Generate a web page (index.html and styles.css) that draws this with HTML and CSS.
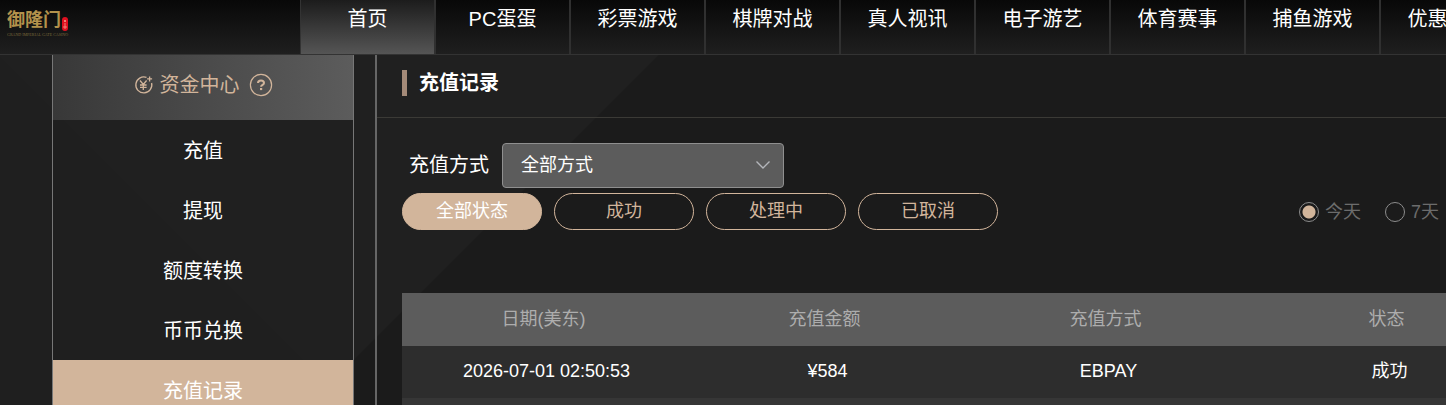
FILE: index.html
```html
<!DOCTYPE html>
<html lang="zh-CN">
<head>
<meta charset="utf-8">
<meta name="viewport" content="width=device-width, initial-scale=1">
<title>充值记录</title>
<link rel="stylesheet" href="styles.css">
</head>
<body class="page">
<header class="topbar">
  <a class="brand" href="#" aria-label="御隆门">
    <svg class="brand-logo" width="64" height="34" viewBox="0 0 64 34">
      <text class="brand-name" x="0" y="22">御隆门</text>
      <rect x="55" y="13" width="6" height="14" rx="3" fill="#e01020"/>
      <path d="M57 16l2 2M59 16l-2 2M57 20h2M57 22h2v2h-2z" fill="none" stroke="#f2a08c" stroke-width=".8"/>
      <text class="brand-sub" x="0" y="32">GRAND IMPERIAL GATE CASINO</text>
    </svg>
  </a>
  <nav class="nav">
    <a class="nav-item is-active" href="#">首页</a>
    <a class="nav-item" href="#">PC蛋蛋</a>
    <a class="nav-item" href="#">彩票游戏</a>
    <a class="nav-item" href="#">棋牌对战</a>
    <a class="nav-item" href="#">真人视讯</a>
    <a class="nav-item" href="#">电子游艺</a>
    <a class="nav-item" href="#">体育赛事</a>
    <a class="nav-item" href="#">捕鱼游戏</a>
    <a class="nav-item" href="#">优惠活动</a>
  </nav>
</header>
<div class="layout">
  <aside class="sidebar">
    <h2 class="side-title">
      <svg width="20" height="20" viewBox="0 0 20 20" fill="none" stroke="currentColor" stroke-width="1.3">
        <path d="M12.500 2.400A8 8 0 1 0 17.600 8"/>
        <path d="M15.600 1.400v5M13.100 3.900h5"/>
        <path d="M6 5.500l3.300 4 3.300-4M9.300 9.500v5.500M6 10h6.600M6 12.400h6.600"/>
      </svg>
      <span>资金中心</span>
      <svg class="help" width="24" height="24" viewBox="0 0 24 24" fill="none" stroke="currentColor">
        <circle cx="12" cy="12" r="10.600" stroke-width="1.200"/>
        <path d="M9 10c0-3.400 6-3.400 6 0 0 1.800-2.900 1.800-2.900 3.700" stroke-width="2"/>
        <path d="M11 15h2.200v2.100H11z" fill="currentColor" stroke="none"/>
      </svg>
    </h2>
    <a class="side-item" href="#">充值</a>
    <a class="side-item" href="#">提现</a>
    <a class="side-item" href="#">额度转换</a>
    <a class="side-item" href="#">币币兑换</a>
    <a class="side-item is-active" href="#">充值记录</a>
  </aside>
  <main class="content">
    <h1 class="title">充值记录</h1>
    <div class="filters">
      <div class="method">
        <label for="method">充值方式</label>
        <span class="select-wrap">
          <select id="method"><option>全部方式</option></select>
          <svg class="chevron" width="16" height="10" viewBox="0 0 16 10" fill="none" stroke="#b4b6bb" stroke-width="1.400"><path d="M1.500 1.500L8 8l6.500-6.500"/></svg>
        </span>
      </div>
      <div class="status-row">
        <div class="pills">
          <button class="pill is-active" type="button">全部状态</button>
          <button class="pill" type="button">成功</button>
          <button class="pill" type="button">处理中</button>
          <button class="pill" type="button">已取消</button>
        </div>
        <div class="ranges">
          <label class="range"><input type="radio" name="range" checked>今天</label>
          <label class="range"><input type="radio" name="range">7天</label>
        </div>
      </div>
    </div>
    <table class="records">
      <thead>
        <tr><th>日期(美东)</th><th>充值金额</th><th>充值方式</th><th>状态</th></tr>
      </thead>
      <tbody>
        <tr><td>2026-07-01 02:50:53</td><td>¥584</td><td>EBPAY</td><td>成功</td></tr>
        <tr><td></td><td></td><td></td><td></td></tr>
      </tbody>
    </table>
  </main>
</div>
</body>
</html>
```

FILE: styles.css
```css
* { box-sizing: border-box; }

.page {
  margin: 0;
  height: 100vh;
  display: flex;
  flex-direction: column;
  overflow: hidden;
  color: #fff;
  font: 20px/30px "Liberation Sans", "Noto Sans CJK SC", sans-serif;
  background:
    linear-gradient(45deg, rgba(0, 0, 0, .04) 246px, transparent 247px),
    linear-gradient(135deg, #202020 504px, #1b1b1b 505px);
}

a { color: inherit; text-decoration: none; }

.topbar {
  flex: none;
  display: flex;
  height: 55px;
  border-bottom: 1px solid #333;
  background: linear-gradient(#080808, #1f1f1f);
}
.brand { flex: none; width: 300px; padding: 4px 7px; }
.brand-logo { display: block; }
.brand-name { font-size: 18px; font-weight: 700; fill: #b3924c; }
.brand-sub { font-family: "Liberation Serif", serif; font-size: 4px; fill: #7d6a3c; }
.nav { flex: none; display: flex; border-left: 1px solid #333; }
.nav-item {
  width: 135px;
  height: 54px;
  padding-top: 4px;
  text-align: center;
  border-right: 2px solid #303030;
}
.nav-item.is-active { background: linear-gradient(#1c1c1c, #555); }

.layout { flex: 1; min-height: 0; display: flex; align-items: stretch; }
.sidebar {
  flex: none;
  width: 302px;
  margin: 0 21px 0 52px;
  border: solid #777;
  border-width: 0 1px;
}
.side-title {
  display: flex;
  align-items: center;
  justify-content: center;
  gap: 6px;
  height: 65px;
  margin: 0;
  padding-bottom: 6px;
  color: #d2b59b;
  font-size: 20px;
  font-weight: 400;
  background: linear-gradient(90deg, #383838, #5c5c5c);
}
.help { margin-left: 3px; }
.side-item { display: block; height: 60px; padding-top: 16px; text-align: center; }
.side-item.is-active { background: #d2b59b; }

.content { flex: 1; min-width: 0; border-left: 2px solid #666; }
.title {
  display: flex;
  align-items: center;
  gap: 12px;
  height: 63px;
  margin: 0;
  padding: 0 25px 6px;
  border-bottom: 1px solid #3b3a36;
  font-size: 20px;
}
.title::before { content: ""; width: 5px; height: 26px; background: #a48a78; }

.filters { padding: 25px 7px 63px 25px; }
.method { display: flex; align-items: center; gap: 13px; padding-left: 7px; }
.method label { padding-bottom: 2px; }
.select-wrap { position: relative; }
.select-wrap select {
  display: block;
  width: 282px;
  height: 45px;
  padding: 0 40px 2px 18px;
  appearance: none;
  border: 1px solid #8f8f8f;
  border-radius: 4px;
  background: #5c5c5c;
  color: #fff;
  font: inherit;
  font-size: 18px;
}
.chevron { position: absolute; right: 13px; top: 17px; pointer-events: none; }
.status-row { display: flex; align-items: center; justify-content: space-between; padding-top: 5px; }
.pills { display: flex; gap: 12px; }
.pill {
  width: 140px;
  height: 37px;
  padding: 0 0 2px;
  border: 1px solid #d2b59b;
  border-radius: 19px;
  background: transparent;
  color: #d2b59b;
  font: inherit;
  font-size: 18px;
}
.pill.is-active { background: #d2b59b; color: #fff; }
.ranges { display: flex; gap: 24px; font-size: 18px; color: #6c6c6c; }
.range { display: flex; align-items: center; gap: 6px; }
.range input {
  appearance: none;
  width: 20px;
  height: 20px;
  margin: 0;
  border: 1px solid #8c8c8c;
  border-radius: 50%;
}
.range input:checked { background: radial-gradient(circle, #d2b59b 6px, transparent 7px); }

.records {
  width: 1124px;
  margin-left: 25px;
  table-layout: fixed;
  border-collapse: collapse;
  font-size: 18px;
}
.records th { height: 53px; padding: 0 0 2px 2px; background: #5c5c5c; color: #adadad; font-weight: 400; }
.records td { height: 52px; padding: 0 0 3px 8px; background: #2d2d2d; text-align: center; }
.records tr:nth-child(even) td { background: #363636; }
```
